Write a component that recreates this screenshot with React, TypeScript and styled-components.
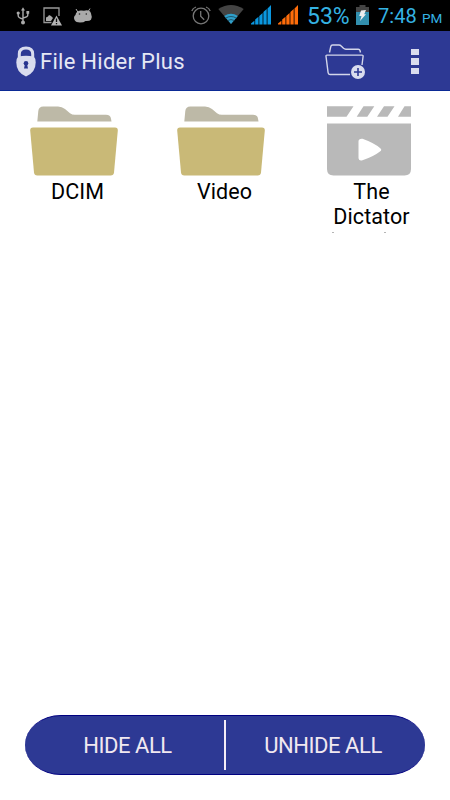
import * as React from 'react';
import styled, {createGlobalStyle} from 'styled-components';

const files = [
  {name: 'DCIM', kind: 'folder'},
  {name: 'Video', kind: 'folder'},
  {name: 'The Dictator', kind: 'video'},
];

const UsbIcon = () => (
  <svg width='14' height='18' viewBox='0 0 14 18' fill='none' stroke='#aaa' strokeWidth='1.4'>
    <path d='M7 3v12M2.2 6.500v2.300q0 2 4.800 3.400M11.800 6v2q0 2-4.800 3'/>
    <path d='M7 .2l2 3.300H5zM10.400 4h2.800v2.800h-2.800z' fill='#aaa' stroke='none'/>
    <circle cx='2.2' cy='6' r='1.6' fill='#aaa' stroke='none'/>
    <circle cx='7' cy='15.5' r='2' fill='#aaa' stroke='none'/>
  </svg>
);

const ScreenshotIcon = () => (
  <svg width='20' height='20' viewBox='0 0 20 20'>
    <path d='M8.500 16.500H1V2h15v8' fill='none' stroke='#999' strokeWidth='1.3'/>
    <path d='M3 15v-3.500l2-1 1-1.500 2 1 2 2-2 3z' fill='#aaa'/>
    <path d='M13.500 9.500L19 19.500H8z' fill='#b4b4b4'/>
    <path d='M13.500 12.500v3.500M13.500 17v1.300' stroke='#111' strokeWidth='1.3'/>
  </svg>
);

const AndroidIcon = () => (
  <svg width='20' height='17' viewBox='0 0 20 17'>
    <path d='M3 2l1.800 3M17 1.500l-1.800 3' stroke='#aaa' strokeWidth='1'/>
    <path d='M2.500 8q.5-4 5-4.500 2-.2 3.500.3 1-.6 3-.6 4 .3 4.300 4.500 1.300 2.500-.3 5-1.500 1.500-5.500 1.200-1.500 1.600-5.500 1.600-4 0-5.300-2.200Q0 10 2.500 8z' fill='#aaa'/>
    <circle cx='6.500' cy='7' r='.8' fill='#222'/>
    <circle cx='13.300' cy='7' r='.8' fill='#222'/>
  </svg>
);

const AlarmIcon = () => (
  <svg width='20' height='20' viewBox='0 0 20 20' fill='none' stroke='#777' strokeWidth='1.3'>
    <circle cx='10' cy='11' r='7.800'/>
    <path d='M9.700 6v5.300l3.500 3.500M.8 6q1-3 4.200-4M15 2q3.200 1 4.200 4'/>
  </svg>
);

const WifiIcon = () => (
  <svg width='26' height='20' viewBox='0 0 26 20'>
    <path d='M.3 4Q13-4 25.700 4L13 19z' fill='#444'/>
    <path d='M6.200 11Q13 6.500 19.800 11L13 19z' fill='#2f9fca'/>
    <path d='M7.500 13.200Q13 9.800 18.500 13.200M9.500 15.600Q13 13.500 16.500 15.600' fill='none' stroke='#174354' strokeWidth='.8'/>
  </svg>
);

const SignalIcon = ({color}: {color: string}) => (
  <svg width='21' height='20' viewBox='0 0 21 20' fill={color}>
    <path d='M0 19.500v-1l3.400-2.800v3.800zM4.200 19.500v-5l3.300-2.800v7.800zM8.300 19.500v-8.500l3.300-3v11.500zM12.400 19.500V7l3.300-3v15.500zM16.500 19.500V3.500L20 0v19.500z'/>
  </svg>
);

const BatteryIcon = () => (
  <svg width='13' height='20' viewBox='0 0 13 20'>
    <path d='M3.500 0h6v2H13v18H0V2h3.500z' fill='#444'/>
    <path d='M0 7h13v13H0z' fill='#328fae'/>
    <path d='M5 5.500l5-.5-1.800 4.300H10L4 16l1.500-5H3.200z' fill='#eee'/>
  </svg>
);

const LockIcon = () => (
  <svg width='20' height='31' viewBox='0 0 20 31'>
    <path d='M3.300 11V8q0-6 6.700-6T16.700 8v3' fill='none' stroke='#d9dcee' strokeWidth='3'/>
    <path d='M2 10.800Q10 8.800 18 10.800q1.700 1.500 1.700 5.700 0 10-9.700 14Q.3 26.500.3 16.500q0-4.200 1.700-5.700z' fill='#d9dcee'/>
    <circle cx='10' cy='17.300' r='2.300' fill='#27348f'/>
    <path d='M9 18h2l1 4.500H8z' fill='#27348f'/>
  </svg>
);

const AddFolderIcon = () => (
  <svg width='42' height='36' viewBox='0 0 42 36' fill='none' stroke='#d3d6ea' strokeWidth='1.4'>
    <path d='M4.500 8.500l1.200-5.700Q6 1 7.700 1h6.200q1.400 0 2.300 1l2.300 2.300q1 .9 2.300.9h12.500q1.400 0 1.700 1.300l.5 2'/>
    <path d='M25 30.500H5q-1.700 0-1.900-1.800L1 12.300q-.1-1.200 1-1.200h35q1.200 0 1.100 1.200L37 21'/>
    <circle cx='33' cy='28' r='7' fill='#d9dcee' stroke='none'/>
    <path d='M29 28h8M33 24v8' stroke='#2d3994' strokeWidth='1.6'/>
  </svg>
);

const FolderIcon = () => (
  <svg width='90' height='70' viewBox='0 0 90 70'>
    <path d='M7.300 15.600L8.300 5q.5-4.500 5-4.500H28q4 0 7 2.500l5 4.300q2 1.500 5 1.500h31q4.500 0 5 4l.5 2.800z' fill='#bdb9a7'/>
    <path d='M3 21.500h82q3 0 2.800 3L84 66.500q-.3 3-3.300 3H7.300q-3 0-3.300-3L.2 24.500q-.2-3 2.800-3z' fill='#c9b977'/>
  </svg>
);

const MovieIcon = () => (
  <svg width='84' height='70' viewBox='0 0 84 70'>
    <path d='M0 .3h26.500l-7 10.400H0zM36.500.3h10.800l-7 10.400H29.700zM57 .3h10.500l-7 10.400H50zM77.500.3H84v10.400H71z' fill='#b9b9b9'/>
    <path d='M0 17.500h84V63q0 6.500-6.500 6.500h-71Q0 69.500 0 63z' fill='#b9b9b9'/>
    <path d='M31.500 35.500q0-3 4-2.700Q47 37 53 42q2.500 1.800 0 3.600Q46 51 35.500 54.300q-3.500 1-4-2z' fill='#fff'/>
  </svg>
);

const App = () => {
  return (
    <Screen>
      <GlobalStyle/>
      <StatusBar>
        <Notifications>
          <UsbIcon/>
          <ScreenshotIcon/>
          <AndroidIcon/>
        </Notifications>
        <SystemIcons>
          <AlarmIcon/>
          <WifiIcon/>
          <SignalIcon color='#0a97e0'/>
          <SignalIcon color='#ff6d0a'/>
        </SystemIcons>
        <BatteryText>53%</BatteryText>
        <BatteryIcon/>
        <Clock>7:48<Period>PM</Period></Clock>
      </StatusBar>
      <Header>
        <LockIcon/>
        <Title>File Hider Plus</Title>
        <AddButton aria-label='Add folder'><AddFolderIcon/></AddButton>
        <MenuButton aria-label='Menu'>
          <MenuDot/>
          <MenuDot/>
          <MenuDot/>
        </MenuButton>
      </Header>
      <FileGrid>
        {files.map((file) => (
          <FileItem key={file.name}>
            {file.kind === 'folder' ? <FolderIcon/> : <MovieIcon/>}
            <FileName>{file.name}</FileName>
            {file.kind === 'video' && <ClippedLine><Tip/><Tip/></ClippedLine>}
          </FileItem>
        ))}
      </FileGrid>
      <ActionBar>
        <ActionButton indent={6}>HIDE ALL</ActionButton>
        <Divider/>
        <ActionButton indent={-5}>UNHIDE ALL</ActionButton>
      </ActionBar>
    </Screen>
  );
};

const GlobalStyle = createGlobalStyle`
  body {
    margin: 0;
    background: #ffffff;
  }
  * {
    box-sizing: border-box;
  }
  svg {
    display: block;
    flex-shrink: 0;
  }
  button {
    border: 0;
    padding: 0;
    background: none;
    font-family: 'Roboto', sans-serif;
  }
`;

const Screen = styled.div`
  width: 450px;
  height: 800px;
  display: flex;
  flex-direction: column;
  background: #ffffff;
  font-family: 'Roboto', sans-serif;
  overflow: hidden;
`;

const StatusBar = styled.div`
  height: 31px;
  flex-shrink: 0;
  display: flex;
  align-items: center;
  padding-bottom: 1px;
  background: #000000;
  color: #35b3e3;
`;

const Notifications = styled.div`
  width: 190px;
  padding: 1px 0 0 16px;
  display: flex;
  align-items: center;
  gap: 13px;
  svg:nth-child(2) {
    margin-right: -3px;
  }
`;

const SystemIcons = styled.div`
  width: 117px;
  display: flex;
  align-items: center;
  padding-left: 1px;
  gap: 7px;
  svg:nth-child(3) {
    margin-right: -1px;
  }
`;

const BatteryText = styled.span`
  width: 49px;
  font-size: 23px;
  line-height: 30px;
  padding-top: 4px;
`;

const Clock = styled.span`
  margin: 1px 0 0 9px;
  font-size: 20px;
  letter-spacing: 0.1px;
  white-space: nowrap;
`;

const Period = styled.span`
  margin-left: 5px;
  font-size: 13.5px;
`;

const Header = styled.header`
  height: 60px;
  flex-shrink: 0;
  display: flex;
  align-items: center;
  padding: 2px 0 0 16px;
  background: #2d3994;
  border-bottom: 1px solid #0b2a95;
`;

const Title = styled.h1`
  width: 285px;
  margin: 0 0 0 4px;
  color: #e6e8f4;
  font-size: 22px;
  font-weight: 400;
  letter-spacing: 0.27px;
  white-space: nowrap;
`;

const AddButton = styled.button`
  width: 42px;
`;

const MenuButton = styled.button`
  margin: 0 0 0 44px;
  display: flex;
  flex-direction: column;
  gap: 3px;
`;

const MenuDot = styled.span`
  width: 8px;
  height: 6.5px;
  background: #d9dcee;
`;

const FileGrid = styled.main`
  flex: 1;
  display: grid;
  grid-template-columns: repeat(3, 147px);
  align-content: start;
  padding: 15px 0 0 1px;
`;

const FileItem = styled.div`
  display: flex;
  flex-direction: column;
  align-items: center;
  height: 130px;
`;

const FileName = styled.span`
  width: 110px;
  margin: 3px 0 0 6px;
  color: #000000;
  font-size: 21.5px;
  line-height: 25px;
  letter-spacing: 0.1px;
  text-align: center;
`;

const ClippedLine = styled.div`
  width: 54px;
  margin: 3px 0 0 -20px;
  display: flex;
  justify-content: space-between;
`;

const Tip = styled.span`
  width: 2px;
  height: 1px;
  background: #b5b5b5;
`;

const ActionBar = styled.footer`
  width: 400px;
  height: 60px;
  flex-shrink: 0;
  margin: 0 25px 25px;
  display: flex;
  align-items: center;
  background: #2d3994;
  border: solid #000080;
  border-width: 1px 0;
  border-radius: 36px / 30px;
`;

const ActionButton = styled.button<{indent: number}>`
  flex: 1 1 0;
  min-width: 0;
  height: 100%;
  text-indent: ${(props) => props.indent}px;
  color: #f1e8f0;
  font-size: 22px;
  letter-spacing: -0.45px;
`;

const Divider = styled.div`
  width: 2px;
  height: 50px;
  background: #f4edf7;
`;

export default App;
